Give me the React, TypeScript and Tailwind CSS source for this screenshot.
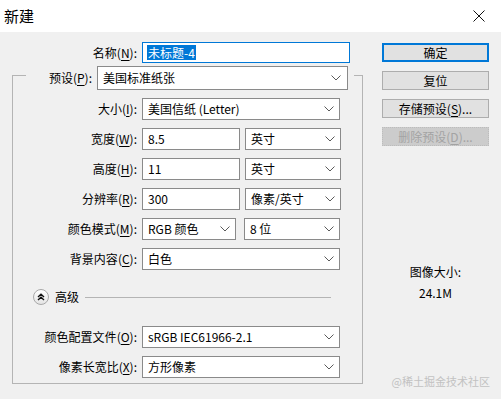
import React from "react";

const font = { fontFamily: '"Noto Sans CJK SC", "Noto Sans", sans-serif' };

const Chevron = () => (
  <svg width="10" height="6" viewBox="0 0 10 6" className="shrink-0">
    <path d="M0.5 0.5 L5 5 L9.5 0.5" fill="none" stroke="#5a5a5a" strokeWidth="1" />
  </svg>
);

const Label = ({ text, k, className = "" }: { text: string; k: string; className?: string }) => (
  <span className={`text-[12px] leading-[16px] text-black text-right whitespace-nowrap ${className}`}>
    {text}(<span className="underline underline-offset-2">{k}</span>):
  </span>
);

const Select = ({ value, w }: { value: string; w: string }) => (
  <div className={`${w} h-[22px] bg-white border border-[#8a8a8a] flex items-center justify-between pl-[5px] pr-[5px]`}>
    <span className="text-[12px] leading-[16px] text-black whitespace-nowrap">{value}</span>
    <Chevron />
  </div>
);

const Input = ({ value, w }: { value: string; w: string }) => (
  <div className={`${w} h-[22px] bg-white border border-[#8a8a8a] flex items-center pl-[5px]`}>
    <span className="text-[12px] leading-[16px] text-black">{value}</span>
  </div>
);

const Row = ({ text, k, children }: { text: string; k: string; children: React.ReactNode }) => (
  <div className="flex items-center h-[22px]">
    <Label text={text} k={k} className="w-[124px]" />
    <div className="ml-[5px] flex gap-[5px]">{children}</div>
  </div>
);

const Button = ({ children, primary = false, disabled = false }: { children: React.ReactNode; primary?: boolean; disabled?: boolean }) => (
  <div
    className={`w-[107px] h-[19px] flex items-center justify-center text-[12px] leading-[16px] ${
      primary
        ? "bg-[#e1e1e1] border-2 border-[#0078d7] text-black"
        : disabled
        ? "bg-[#cccccc] border border-dotted border-[#bcbcbc] text-[#a3a3a3]"
        : "bg-[#e1e1e1] border border-[#adadad] text-black"
    }`}
  >
    {children}
  </div>
);

export default function App() {
  return (
    <div className="w-[501px] h-[399px] bg-[#f0f0f0] flex flex-col overflow-hidden relative" style={font}>
      {/* title bar */}
      <div className="h-[32px] bg-white flex items-center justify-between pl-[4px] pr-[16px] shrink-0">
        <span className="text-[15px] leading-[20px] text-black">新建</span>
        <svg width="12" height="12" viewBox="0 0 12 12">
          <path d="M0.5 0.5 L11.5 11.5 M11.5 0.5 L0.5 11.5" stroke="#111" strokeWidth="1" />
        </svg>
      </div>

      <div className="flex">
        {/* left column */}
        <div className="w-[363px] pl-[12px] shrink-0">
          <div className="mt-[10px] flex items-center h-[21px]">
            <Label text="名称" k="N" className="w-[125px]" />
            <div className="ml-[5px] w-[208px] h-[21px] bg-white border border-[#0078d7] flex items-center pl-[4px]">
              <span className="bg-[#0078d7] text-white text-[12px] leading-[15px] px-[1px]">未标题-4</span>
            </div>
          </div>

          <div className="mt-[12px] w-[351px] h-[309px] border border-[#b4b4b4] flex flex-col">
            {/* legend */}
            <div className="-mt-[10px] ml-[13px] w-[328px] bg-[#f0f0f0] flex items-center h-[24px]">
              <Label text="预设" k="P" className="w-[66px]" />
              <div className="ml-[5px] w-[251px] h-[24px] bg-white border border-[#8a8a8a] flex items-center justify-between pl-[5px] pr-[6px]">
                <span className="text-[12px] leading-[16px] text-black">美国标准纸张</span>
                <Chevron />
              </div>
            </div>

            <div className="mt-[8px] flex flex-col gap-[8px]">
              <Row text="大小" k="I">
                <Select value="美国信纸 (Letter)" w="w-[198px]" />
              </Row>
              <Row text="宽度" k="W">
                <Input value="8.5" w="w-[98px]" />
                <Select value="英寸" w="w-[96px]" />
              </Row>
              <Row text="高度" k="H">
                <Input value="11" w="w-[98px]" />
                <Select value="英寸" w="w-[96px]" />
              </Row>
              <Row text="分辨率" k="R">
                <Input value="300" w="w-[98px]" />
                <Select value="像素/英寸" w="w-[96px]" />
              </Row>
              <Row text="颜色模式" k="M">
                <Select value="RGB 颜色" w="w-[94px]" />
                <div className="ml-[3px]">
                  <Select value="8 位" w="w-[96px]" />
                </div>
              </Row>
              <Row text="背景内容" k="C">
                <Select value="白色" w="w-[198px]" />
              </Row>
            </div>

            {/* advanced divider */}
            <div className="mt-[19px] ml-[20px] flex items-center h-[16px]">
              <div className="w-[16px] h-[16px] rounded-full border border-[#a8a8a8] bg-gradient-to-b from-white to-[#e4e4e4] flex items-center justify-center">
                <svg width="8" height="8" viewBox="0 0 8 8">
                  <path d="M1 4 L4 1.2 L7 4 M1 7 L4 4.2 L7 7" fill="none" stroke="#111" strokeWidth="1.4" />
                </svg>
              </div>
              <span className="ml-[6px] text-[12px] leading-[16px] text-black">高级</span>
              <div className="ml-[6px] w-[246px] h-px bg-[#b4b4b4]" />
            </div>

            <div className="mt-[21px] flex flex-col gap-[8px]">
              <Row text="颜色配置文件" k="O">
                <Select value="sRGB IEC61966-2.1" w="w-[198px]" />
              </Row>
              <Row text="像素长宽比" k="X">
                <Select value="方形像素" w="w-[198px]" />
              </Row>
            </div>
          </div>
        </div>

        {/* right column */}
        <div className="ml-[19px] mt-[11px] w-[107px] flex flex-col">
          <div className="flex flex-col gap-[9px]">
            <Button primary>确定</Button>
            <Button>复位</Button>
            <Button>
              存储预设(<span className="underline underline-offset-2">S</span>)...
            </Button>
            <Button disabled>
              删除预设(<span className="underline underline-offset-2">D</span>)...
            </Button>
          </div>
          <div className="mt-[118px] text-center text-[12px] leading-[16px] text-black">图像大小:</div>
          <div className="mt-[5px] text-center text-[12px] leading-[16px] text-black">24.1M</div>
        </div>
      </div>

      {/* watermark */}
      <div className="absolute right-[11px] bottom-[11px] text-[11px] leading-[14px] text-[#c2c2c2]">@稀土掘金技术社区</div>
    </div>
  );
}
